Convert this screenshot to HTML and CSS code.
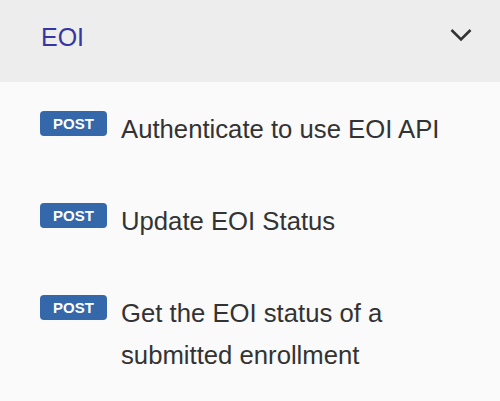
FILE: index.html
```html
<!DOCTYPE html>
<html>
<head>
<meta charset="utf-8">
<link rel="stylesheet" href="styles.css">
</head>
<body>
<div class="panel">
  <div class="header">
    <span class="title">EOI</span>
    <svg class="chev" width="22" height="14" viewBox="0 0 22 14"><path d="M1.5 2 L11 11.5 L20.5 2" fill="none" stroke="#333" stroke-width="2.6"/></svg>
  </div>
  <ul class="list">
    <li class="item"><span class="badge">POST</span><span class="label">Authenticate to use EOI API</span></li>
    <li class="item"><span class="badge">POST</span><span class="label">Update EOI Status</span></li>
    <li class="item"><span class="badge">POST</span><span class="label">Get the EOI status of a submitted enrollment</span></li>
  </ul>
</div>
</body>
</html>
```
FILE: styles.css
```css
html, body { margin: 0; padding: 0; background: #fafafa; }
body { font-family: "Liberation Sans", Arial, sans-serif; width: 500px; height: 401px; overflow: hidden; }
.header {
  background: #ededed;
  height: 82px;
  box-sizing: border-box;
  padding: 16px 28px 0 41px;
  display: flex;
  justify-content: space-between;
  align-items: flex-start;
}
.title { font-size: 25px; line-height: 42px; color: #3535a3; }
.chev { margin-top: 12px; }
.list { list-style: none; margin: 0; padding: 0; }
.item {
  display: flex;
  align-items: flex-start;
  padding: 26px 20px 24px 40px;
}
.badge {
  flex: none;
  width: 67px;
  height: 25px;
  margin-top: 3px;
  margin-right: 14px;
  background: #3468ab;
  color: #fff;
  border-radius: 4px;
  font-size: 15px;
  font-weight: bold;
  line-height: 25px;
  text-align: center;
}
.label { font-size: 25.7px; line-height: 42px; color: #333; }
```
